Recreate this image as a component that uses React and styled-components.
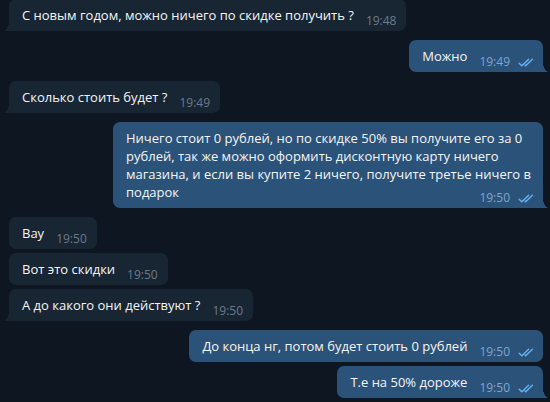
import React from "react";
import styled, { createGlobalStyle, css } from "styled-components";

const GlobalStyle = createGlobalStyle`
  html, body {
    margin: 0;
    padding: 0;
    background: #0e1621;
  }
  body {
    font-family: "Open Sans", "Liberation Sans", sans-serif;
    -webkit-font-smoothing: antialiased;
  }
`;

const Chat = styled.div`
  display: flex;
  flex-direction: column;
  height: 402px;
  margin-top: -1px;
  padding: 0 7px 0 9px;
  overflow: hidden;
  box-sizing: border-box;
`;

const Row = styled.div`
  display: flex;
  justify-content: ${props => (props.$out ? "flex-end" : "flex-start")};
  margin-top: ${props => props.$gap}px;
`;

const Bubble = styled.div`
  position: relative;
  max-width: 430px;
  box-sizing: border-box;
  padding: 7px ${props => (props.$out ? 8 : 10)}px 3px 13px;
  border-radius: 7px;
  background: ${props => (props.$out ? "#2b5278" : "#182533")};
  color: #f5f5f5;
  font-size: 13px;
  line-height: 18px;

  ${props =>
    props.$tail &&
    css`
      border-bottom-${props.$out ? "right" : "left"}-radius: 0;
      &::after {
        content: "";
        position: absolute;
        bottom: 0;
        ${props.$out ? "right" : "left"}: -6px;
        width: 6px;
        height: 10px;
        background: radial-gradient(
          6px 10px at ${props.$out ? "100%" : "0"} 0,
          transparent 98%,
          ${props.$out ? "#2b5278" : "#182533"} 100%
        );
      }
    `}
`;

const Meta = styled.span`
  float: right;
  display: flex;
  align-items: center;
  gap: 8px;
  height: 14px;
  margin: 8px 0 0 12px;
  font-size: 12px;
  line-height: 14px;
  color: ${props => (props.$out ? "#7ea6cf" : "#6c7b8b")};
`;

const Checks = styled.svg`
  display: block;
  width: 17px;
  height: 9px;
`;

const DoubleCheck = () => (
  <Checks viewBox="0 0 17 9">
    <g fill="none" stroke="#64b2f4" strokeWidth="1.4" strokeLinecap="round">
      <path d="M1.2 5.2 L3.9 7.8 L10.6 1.2" />
      <path d="M7 7.1 L7.7 7.8 L14.4 1.2" />
    </g>
  </Checks>
);

const messages = [
  { text: "С новым годом, можно ничего по скидке получить ?", time: "19:48", gap: 0, tail: true },
  { text: "Можно", time: "19:49", out: true, gap: 9, tail: true },
  { text: "Сколько стоить будет ?", time: "19:49", gap: 9, tail: true },
  {
    text:
      "Ничего стоит 0 рублей, но по скидке 50% вы получите его за 0 рублей, так же можно оформить дисконтную карту ничего магазина, и если вы купите 2 ничего, получите третье ничего в подарок",
    time: "19:50",
    out: true,
    gap: 9,
    tail: true
  },
  { text: "Вау", time: "19:50", gap: 9 },
  { text: "Вот это скидки", time: "19:50", gap: 4 },
  { text: "А до какого они действуют ?", time: "19:50", gap: 4, tail: true },
  { text: "До конца нг, потом будет стоить 0 рублей", time: "19:50", out: true, gap: 9 },
  { text: "Т.е на 50% дороже", time: "19:50", out: true, gap: 4, tail: true }
];

const App = () => (
  <>
    <GlobalStyle />
    <Chat>
      {messages.map((msg, i) => (
        <Row key={i} $out={msg.out} $gap={msg.gap}>
          <Bubble $out={msg.out} $tail={msg.tail}>
            {msg.text}
            <Meta $out={msg.out}>
              {msg.time}
              {msg.out && <DoubleCheck />}
            </Meta>
          </Bubble>
        </Row>
      ))}
    </Chat>
  </>
);

export default App;
